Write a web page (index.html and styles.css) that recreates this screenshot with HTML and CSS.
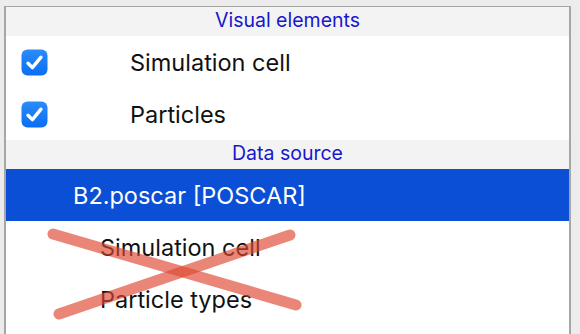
FILE: index.html
```html
<!DOCTYPE html>
<html>
<head>
<meta charset="utf-8">
<link rel="stylesheet" href="styles.css">
</head>
<body>
<div class="panel">
  <div class="section-header">Visual elements</div>
  <div class="row vis-row">
    <svg class="checkbox" viewBox="0 0 27 27" width="27" height="27">
      <defs>
        <linearGradient id="cbg" x1="0" y1="0" x2="0" y2="1">
          <stop offset="0" stop-color="#2b8cfb"/>
          <stop offset="1" stop-color="#0a6ef2"/>
        </linearGradient>
      </defs>
      <rect x="0.5" y="0.5" width="26" height="26" rx="6" fill="url(#cbg)"/>
      <path d="M7 14.2 L11.4 18.6 L20 8.2" fill="none" stroke="#fff" stroke-width="3.4" stroke-linecap="round" stroke-linejoin="round"/>
    </svg>
    <span class="label">Simulation cell</span>
  </div>
  <div class="row vis-row">
    <svg class="checkbox" viewBox="0 0 27 27" width="27" height="27">
      <rect x="0.5" y="0.5" width="26" height="26" rx="6" fill="url(#cbg)"/>
      <path d="M7 14.2 L11.4 18.6 L20 8.2" fill="none" stroke="#fff" stroke-width="3.4" stroke-linecap="round" stroke-linejoin="round"/>
    </svg>
    <span class="label">Particles</span>
  </div>
  <div class="section-header">Data source</div>
  <div class="row source-row selected">B2.poscar [POSCAR]</div>
  <div class="children">
    <div class="row child-row">Simulation cell</div>
    <div class="row child-row">Particle types</div>
    <svg class="cross" viewBox="0 0 563 104" width="563" height="104">
      <line x1="47" y1="13" x2="290" y2="84" />
      <line x1="53" y1="93" x2="284" y2="14" />
    </svg>
  </div>
</div>
</body>
</html>
```

FILE: styles.css
```css
html, body {
  margin: 0;
  padding: 0;
  background: #ececec;
  overflow: hidden;
  height: 334px;
}

body {
  font-family: Inter, "Noto Sans", "Liberation Sans", sans-serif;
}

.panel {
  margin: 6px 0 0 4px;
  width: 563px;
  min-height: 400px;
  background: #ffffff;
  border-top: 1px solid #a6a6a6;
  border-left: 2px solid #a6a6a6;
  border-right: 2px solid #a6a6a6;
}

.section-header {
  background: #f3f3f3;
  color: #1717cc;
  font-size: 19.5px;
  text-align: center;
  height: 29px;
  line-height: 27px;
}

.row {
  display: flex;
  align-items: center;
  height: 52px;
  font-size: 23.5px;
  color: #111;
}

.vis-row {
  padding-left: 15px;
}

.checkbox {
  flex: none;
  display: block;
}

.label {
  margin-left: 82px;
}

.source-row {
  padding-left: 67px;
}

.selected {
  background: #0a4fd6;
  color: #ffffff;
}

.children {
  position: relative;
}

.child-row {
  padding-left: 94px;
}

.cross {
  position: absolute;
  left: 0;
  top: 0;
  pointer-events: none;
}

.cross line {
  stroke: rgba(222, 72, 50, 0.66);
  stroke-width: 11;
  stroke-linecap: round;
}
```
